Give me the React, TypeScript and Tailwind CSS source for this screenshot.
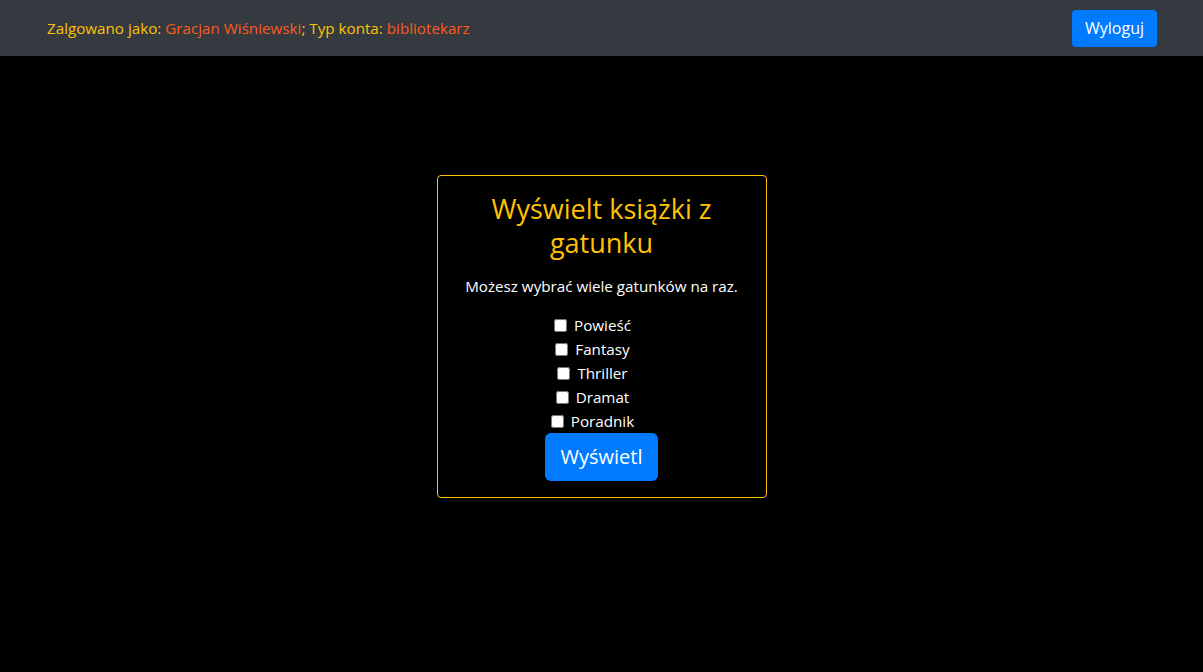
const genres = ["Powieść", "Fantasy", "Thriller", "Dramat", "Poradnik"];

export default function App() {
  return (
    <div className="min-h-[672px] bg-black text-white font-['Open_Sans',sans-serif]">
      <nav className="h-14 bg-[#343a40] flex items-center justify-between pl-[47px] pr-[46px]">
        <span className="text-[#ffc107] text-[15.2px]">
          Zalgowano jako: <span className="text-[#fd5a1e]">Gracjan Wiśniewski</span>; Typ konta:{" "}
          <span className="text-[#fd5a1e]">bibliotekarz</span>
        </span>
        <button className="h-[37px] w-[85px] rounded bg-[#007bff] text-white text-base">Wyloguj</button>
      </nav>

      <div className="flex justify-center pt-[119px]">
        <form className="w-[330px] border border-[#ffc107] rounded p-4 flex flex-col items-center text-center">
          <h3 className="text-[27px] leading-[33.6px] text-[#ffc107] mb-[15px]">Wyświelt książki z gatunku</h3>
          <p className="text-[15.2px] leading-6 mb-[15px]">Możesz wybrać wiele gatunków na raz.</p>
          {genres.map((g) => (
            <label key={g} className="flex items-center justify-center gap-[7px] h-6 pr-[18px] text-[15.2px]">
              <input type="checkbox" className="w-[13px] h-[13px]" />
              {g}
            </label>
          ))}
          <button type="button" className="h-12 px-4 rounded-md bg-[#007bff] text-white text-xl">
            Wyświetl
          </button>
        </form>
      </div>
    </div>
  );
}
